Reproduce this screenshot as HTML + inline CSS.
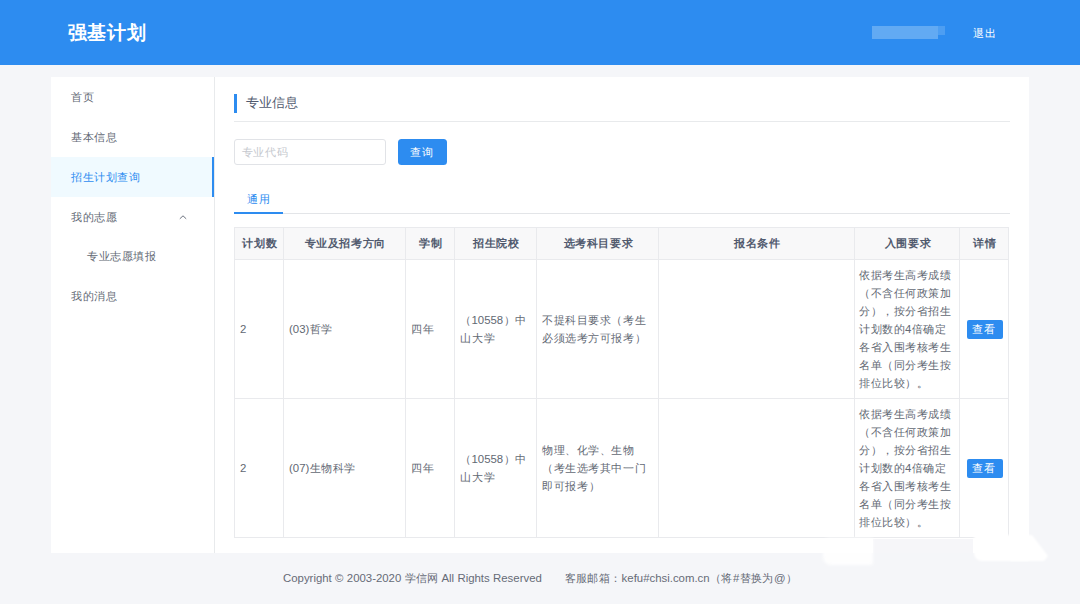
<!DOCTYPE html>
<html>
<head>
<meta charset="utf-8">
<style>
*{margin:0;padding:0;box-sizing:border-box;}
html,body{width:1080px;height:604px;overflow:hidden;}
body{position:relative;background:#f5f6f9;font-family:"Liberation Sans",sans-serif;color:#515a6e;font-size:12px;}
.t{position:absolute;white-space:nowrap;text-align:justify;text-align-last:justify;}
.b{position:absolute;}
#hdr{left:0;top:0;width:1080px;height:65px;background:#2d8cf0;}
#side{left:51px;top:77px;width:163px;height:476px;background:#fff;}
#sideb{left:214px;top:77px;width:1px;height:476px;background:#e8eaec;}
#act{left:51px;top:157px;width:163px;height:40px;background:#f0faff;}
#actb{left:212px;top:157px;width:2px;height:40px;background:#2d8cf0;}
#main{left:215px;top:77px;width:814px;height:476px;background:#fff;}
#tbar{left:234px;top:94px;width:3px;height:19px;background:#2d8cf0;}
#hr{left:234px;top:121px;width:776px;height:1px;background:#e8eaec;}
#inp{left:234px;top:139px;width:152px;height:26px;border:1px solid #e1e3e7;border-radius:3px;background:#fff;}
#btn{left:397.5px;top:139px;width:49px;height:26px;border-radius:3.5px;background:#2d8cf0;}
#tabline{left:234px;top:213px;width:776px;height:1px;background:#e3e5e8;}
#tabink{left:234px;top:212px;width:49px;height:2px;background:#2d8cf0;}
#thbg{left:234px;top:227px;width:775px;height:33px;background:#f8f8f9;}
.hl{position:absolute;left:234px;width:775px;height:1px;background:#e9eaed;}
.vl{position:absolute;top:227px;width:1px;height:311px;background:#e9eaed;}
.vbtn{position:absolute;left:966.5px;width:36px;height:19px;background:#2d8cf0;border-radius:2px;}

</style>
</head>
<body>
<div class="b" id="hdr"></div>
<div class="b" style="left:872px;top:26px;width:66px;height:13px;background:#62aaf3;"></div>
<div class="b" style="left:938px;top:26px;width:7px;height:9px;background:#4d9ef2;"></div>
<div class="b" id="side"></div>
<div class="b" id="act"></div>
<div class="b" id="actb"></div>
<div class="b" id="sideb"></div>
<svg class="b" style="left:178px;top:213px" width="10" height="8" viewBox="0 0 10 8"><path d="M1.8 5.8 L5 2.8 L8.2 5.8" fill="none" stroke="#6d7380" stroke-width="1"/></svg>
<div class="b" id="main"></div>
<div class="b" id="tbar"></div>
<div class="b" id="hr"></div>
<div class="b" id="inp"></div>
<div class="b" id="btn"></div>
<div class="b" id="tabline"></div>
<div class="b" id="tabink"></div>
<div class="b" id="thbg"></div>
<div class="hl" style="top:227px"></div>
<div class="hl" style="top:259px"></div>
<div class="hl" style="top:398px"></div>
<div class="hl" style="top:537px"></div>
<div class="vl" style="left:234px"></div>
<div class="vl" style="left:283px"></div>
<div class="vl" style="left:405px"></div>
<div class="vl" style="left:454px"></div>
<div class="vl" style="left:536px"></div>
<div class="vl" style="left:658px"></div>
<div class="vl" style="left:854px"></div>
<div class="vl" style="left:959px"></div>
<div class="vl" style="left:1008px"></div>
<div class="vbtn" style="top:320px"></div>
<div class="vbtn" style="top:459px"></div>
<div class="b" style="left:873px;top:539px;width:100px;height:14px;background:#f6f6f9;"></div>
<div class="b" style="left:823px;top:538px;width:50px;height:27px;background:#fff;border-radius:6px 2px 2px 8px;filter:blur(1.5px);opacity:.9"></div>
<div class="b" style="left:974px;top:535px;width:56px;height:26px;background:#fff;border-radius:2px 6px 2px 8px;filter:blur(1.2px);"></div>
<svg class="b" style="left:1010px;top:530px" width="40" height="35"><path d="M0 5 L22 5 L38 26 L34 31 L0 31 Z" fill="#fff" style="filter:blur(1.2px)"/></svg>

<div class="t" id="t0" style="left:67.50px;top:20.90px;font-size:19px;line-height:23px;color:#fff;width:78.80px;font-weight:bold;">强基计划</div>
<div class="t" id="t1" style="left:973.00px;top:25.70px;font-size:11.4px;line-height:15.4px;color:#fff;width:23.00px;">退出</div>
<div class="t" id="t2" style="left:71.00px;top:89.90px;font-size:11.4px;line-height:15.4px;color:#626873;width:23.00px;">首页</div>
<div class="t" id="t3" style="left:71.00px;top:129.90px;font-size:11.4px;line-height:15.4px;color:#626873;width:46.01px;">基本信息</div>
<div class="t" id="t4" style="left:71.00px;top:169.70px;font-size:11.4px;line-height:15.4px;color:#2d8cf0;width:69.00px;">招生计划查询</div>
<div class="t" id="t5" style="left:71.00px;top:209.70px;font-size:11.4px;line-height:15.4px;color:#626873;width:46.01px;">我的志愿</div>
<div class="t" id="t6" style="left:87.00px;top:249.30px;font-size:11.4px;line-height:15.4px;color:#626873;width:69.00px;">专业志愿填报</div>
<div class="t" id="t7" style="left:71.00px;top:289.30px;font-size:11.4px;line-height:15.4px;color:#626873;width:46.01px;">我的消息</div>
<div class="t" id="t8" style="left:245.50px;top:94.15px;font-size:13.3px;line-height:17.3px;color:#515a6e;width:52.61px;">专业信息</div>
<div class="t" id="t9" style="left:241.50px;top:145.00px;font-size:11.4px;line-height:15.4px;color:#c5c8ce;width:46.01px;">专业代码</div>
<div class="t" id="t10" style="left:409.50px;top:145.10px;font-size:11.4px;line-height:15.4px;color:#fff;width:23.00px;">查询</div>
<div class="t" id="t11" style="left:247.00px;top:191.50px;font-size:11.4px;line-height:15.4px;color:#2d8cf0;width:23.00px;">通用</div>
<div class="t" id="t12" style="left:242.25px;top:235.80px;font-size:11.4px;line-height:15.4px;color:#515a6e;width:34.51px;font-weight:bold;">计划数</div>
<div class="t" id="t13" style="left:304.75px;top:235.80px;font-size:11.4px;line-height:15.4px;color:#515a6e;width:80.50px;font-weight:bold;">专业及招考方向</div>
<div class="t" id="t14" style="left:419.00px;top:235.80px;font-size:11.4px;line-height:15.4px;color:#515a6e;width:23.00px;font-weight:bold;">学制</div>
<div class="t" id="t15" style="left:473.00px;top:235.80px;font-size:11.4px;line-height:15.4px;color:#515a6e;width:46.01px;font-weight:bold;">招生院校</div>
<div class="t" id="t16" style="left:563.50px;top:235.80px;font-size:11.4px;line-height:15.4px;color:#515a6e;width:69.00px;font-weight:bold;">选考科目要求</div>
<div class="t" id="t17" style="left:734.00px;top:235.80px;font-size:11.4px;line-height:15.4px;color:#515a6e;width:46.01px;font-weight:bold;">报名条件</div>
<div class="t" id="t18" style="left:884.50px;top:235.80px;font-size:11.4px;line-height:15.4px;color:#515a6e;width:46.01px;font-weight:bold;">入围要求</div>
<div class="t" id="t19" style="left:973.00px;top:235.80px;font-size:11.4px;line-height:15.4px;color:#515a6e;width:23.00px;font-weight:bold;">详情</div>
<div class="t" id="t20" style="left:240.00px;top:320.00px;font-size:11.4px;line-height:18px;color:#626873;width:6.35px;">2</div>
<div class="t" id="t21" style="left:289.00px;top:320.00px;font-size:11.4px;line-height:18px;color:#626873;width:43.27px;">(03)哲学</div>
<div class="t" id="t22" style="left:411.00px;top:320.00px;font-size:11.4px;line-height:18px;color:#626873;width:23.00px;">四年</div>
<div class="t" id="t23" style="left:460.00px;top:311.00px;font-size:11.4px;line-height:18px;color:#626873;width:66.19px;">（10558）中</div>
<div class="t" id="t24" style="left:460.00px;top:329.00px;font-size:11.4px;line-height:18px;color:#626873;width:34.51px;">山大学</div>
<div class="t" id="t25" style="left:542.00px;top:311.00px;font-size:11.4px;line-height:18px;color:#626873;width:103.50px;">不提科目要求（考生</div>
<div class="t" id="t26" style="left:542.00px;top:329.00px;font-size:11.4px;line-height:18px;color:#626873;width:103.50px;">必须选考方可报考）</div>
<div class="t" id="t27" style="left:859.00px;top:266.00px;font-size:11.4px;line-height:18px;color:#626873;width:92.00px;">依据考生高考成绩</div>
<div class="t" id="t28" style="left:859.00px;top:284.00px;font-size:11.4px;line-height:18px;color:#626873;width:92.00px;">（不含任何政策加</div>
<div class="t" id="t29" style="left:859.00px;top:302.00px;font-size:11.4px;line-height:18px;color:#626873;width:92.00px;">分），按分省招生</div>
<div class="t" id="t30" style="left:859.00px;top:320.00px;font-size:11.4px;line-height:18px;color:#626873;width:86.85px;">计划数的4倍确定</div>
<div class="t" id="t31" style="left:859.00px;top:338.00px;font-size:11.4px;line-height:18px;color:#626873;width:92.00px;">各省入围考核考生</div>
<div class="t" id="t32" style="left:859.00px;top:356.00px;font-size:11.4px;line-height:18px;color:#626873;width:92.00px;">名单（同分考生按</div>
<div class="t" id="t33" style="left:859.00px;top:374.00px;font-size:11.4px;line-height:18px;color:#626873;width:69.00px;">排位比较）。</div>
<div class="t" id="t34" style="left:240.00px;top:459.00px;font-size:11.4px;line-height:18px;color:#626873;width:6.35px;">2</div>
<div class="t" id="t35" style="left:289.00px;top:459.00px;font-size:11.4px;line-height:18px;color:#626873;width:66.27px;">(07)生物科学</div>
<div class="t" id="t36" style="left:411.00px;top:459.00px;font-size:11.4px;line-height:18px;color:#626873;width:23.00px;">四年</div>
<div class="t" id="t37" style="left:460.00px;top:450.00px;font-size:11.4px;line-height:18px;color:#626873;width:66.19px;">（10558）中</div>
<div class="t" id="t38" style="left:460.00px;top:468.00px;font-size:11.4px;line-height:18px;color:#626873;width:34.51px;">山大学</div>
<div class="t" id="t39" style="left:542.00px;top:441.00px;font-size:11.4px;line-height:18px;color:#626873;width:92.00px;">物理、化学、生物</div>
<div class="t" id="t40" style="left:542.00px;top:459.00px;font-size:11.4px;line-height:18px;color:#626873;width:103.50px;">（考生选考其中一门</div>
<div class="t" id="t41" style="left:542.00px;top:477.00px;font-size:11.4px;line-height:18px;color:#626873;width:57.51px;">即可报考）</div>
<div class="t" id="t42" style="left:859.00px;top:405.00px;font-size:11.4px;line-height:18px;color:#626873;width:92.00px;">依据考生高考成绩</div>
<div class="t" id="t43" style="left:859.00px;top:423.00px;font-size:11.4px;line-height:18px;color:#626873;width:92.00px;">（不含任何政策加</div>
<div class="t" id="t44" style="left:859.00px;top:441.00px;font-size:11.4px;line-height:18px;color:#626873;width:92.00px;">分），按分省招生</div>
<div class="t" id="t45" style="left:859.00px;top:459.00px;font-size:11.4px;line-height:18px;color:#626873;width:86.85px;">计划数的4倍确定</div>
<div class="t" id="t46" style="left:859.00px;top:477.00px;font-size:11.4px;line-height:18px;color:#626873;width:92.00px;">各省入围考核考生</div>
<div class="t" id="t47" style="left:859.00px;top:495.00px;font-size:11.4px;line-height:18px;color:#626873;width:92.00px;">名单（同分考生按</div>
<div class="t" id="t48" style="left:859.00px;top:513.00px;font-size:11.4px;line-height:18px;color:#626873;width:69.00px;">排位比较）。</div>
<div class="t" id="t49" style="left:972.00px;top:321.90px;font-size:11.4px;line-height:15.4px;color:#fff;width:23.00px;">查看</div>
<div class="t" id="t50" style="left:972.00px;top:460.90px;font-size:11.4px;line-height:15.4px;color:#fff;width:23.00px;">查看</div>
<div class="t" id="t51" style="left:283.00px;top:571.30px;font-size:11.4px;line-height:15.4px;color:#666b77;width:258.82px;">Copyright © 2003-2020 学信网 All Rights Reserved</div>
<div class="t" id="t52" style="left:564.50px;top:571.30px;font-size:11.4px;line-height:15.4px;color:#666b77;width:232.41px;">客服邮箱：kefu#chsi.com.cn（将#替换为@）</div>
</body>
</html>
